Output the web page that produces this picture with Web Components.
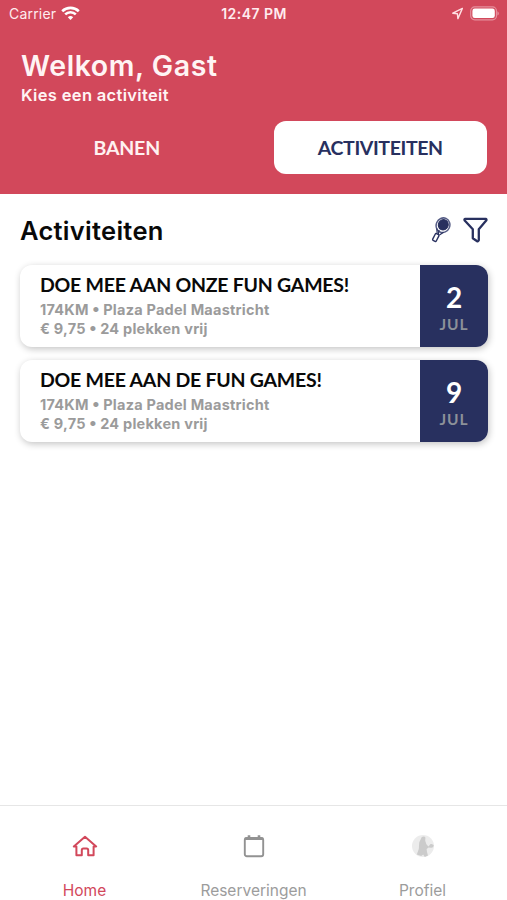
<!DOCTYPE html>
<html lang="nl">
<head>
<meta charset="utf-8">
<title>Activiteiten</title>
<style>
html,body{margin:0;height:100%;background:#fff}
body{font-family:Inter,"Liberation Sans",sans-serif}
</style>
</head>
<body>
<padel-app></padel-app>
<script>
function define(name, html) {
  const t = document.createElement('template');
  t.innerHTML = html;
  customElements.define(name, class extends HTMLElement {
    constructor() {
      super();
      this.attachShadow({mode: 'open'}).appendChild(t.content.cloneNode(true));
    }
  });
}

define('status-bar', `
<style>
:host{display:grid;grid-template-columns:1fr auto 1fr;align-items:center;height:27px;padding:0 8px 0 9px;color:#ffecef;font-size:14px;box-sizing:border-box}
.l{display:flex;align-items:center;gap:5px;letter-spacing:.2px}
.c{font-weight:600;font-size:14px;letter-spacing:.45px}
.r{display:flex;align-items:center;justify-content:flex-end;gap:6px}
svg{display:block}
</style>
<div class="l"><span>Carrier</span>
<svg width="19" height="15" viewBox="0 0 19 15" fill="none" stroke="#fff" stroke-width="2.6"><path d="M1.2 5.2a12 12 0 0 1 16.6 0M4.2 8.4a7.6 7.6 0 0 1 10.6 0"/><path d="M9.5 14l-2.7-2.8a3.9 3.9 0 0 1 5.4 0z" fill="#fff" stroke="none"/></svg></div>
<span class="c">12:47 PM</span>
<div class="r">
<svg width="13" height="13" viewBox="0 0 13 13" fill="none" stroke="#ffdfe3" stroke-width="1.4" stroke-linejoin="round"><path d="M12.4 1.4L2.8 6.2l4.6.5.5 4.9z"/></svg>
<svg width="30" height="15" viewBox="0 0 30 15"><rect x="1.7" y=".9" width="25.8" height="12.9" rx="4" fill="none" stroke="#e58f9d" stroke-width="1.2"/><rect x="3.4" y="2.6" width="22.4" height="9.5" rx="2.3" fill="#fff"/><path d="M28.4 5.2v4.4q1.5-.7 1.5-2.2t-1.5-2.2z" fill="#e58f9d"/></svg>
</div>`);

define('segment-tab', `
<style>
:host{display:flex;flex:1;align-items:center;justify-content:center;height:53px;border-radius:12px;color:#fff1f1;font:700 19.5px Lato,sans-serif;letter-spacing:-.2px}
:host([active]){background:#fff;color:#28305f;letter-spacing:-.38px}
</style><slot></slot>`);

define('page-header', `
<style>
:host{display:block;height:193.5px;background:#d2485b;color:#fff4f4}
.t{padding:22px 20px 0 21px}
h1{margin:0;font-size:28.5px;line-height:34px;font-weight:600;letter-spacing:.58px}
p{margin:2px 0 0;font-size:16.5px;line-height:20px;font-weight:600;letter-spacing:.33px}
nav{display:flex;gap:40px;padding:16px 20px 0}
</style>
<status-bar></status-bar>
<div class="t"><h1><slot name="title"></slot></h1><p><slot name="sub"></slot></p></div>
<nav><slot></slot></nav>`);

define('section-bar', `
<style>
:host{display:flex;align-items:center;justify-content:space-between;height:71.5px;padding:0 19px 0 20px;box-sizing:border-box}
h2{margin:4px 0 0;font-size:25.5px;line-height:32px;font-weight:600;color:#090909;letter-spacing:.28px}
.i{display:flex;gap:12.5px;align-items:center;padding-top:2px}
svg{display:block}
</style>
<h2><slot></slot></h2>
<div class="i">
<svg width="20" height="26" viewBox="0 0 20 26" fill="none" stroke="#28305f"><ellipse cx="12" cy="8.2" rx="6.8" ry="7.4" transform="rotate(24 12 8.2)" stroke-width="1.5" stroke="#565d86"/><ellipse cx="12.3" cy="7.8" rx="4.9" ry="5.3" transform="rotate(24 12.3 7.8)" fill="#28305f"/><path d="M5.8 11.5l.4 5M12.6 15.2l-4.2 2.7M8 13l-.6 4" stroke-width="1.2"/><rect x="-2" y="-3.8" width="4" height="7.6" rx=".9" transform="translate(4.8 20.5) rotate(27)" stroke-width="1.4"/></svg>
<svg width="25" height="26" viewBox="0 0 25 26" fill="none" stroke="#28305f" stroke-width="2.3" stroke-linejoin="round" stroke-linecap="round"><path d="M2.3 1.8h20.4q1.3.5.5 1.7L15.8 12.2v11q-.6 1.7-2 .8l-4-2.8v-9L1.7 3.5q-.8-1.2.6-1.7z"/></svg>
</div>`);

define('activity-card', `
<style>
:host{display:flex;height:82px;border-radius:12px;background:#fff;box-shadow:1px 2px 7px rgba(0,0,0,.24);overflow:hidden}
.b{flex:1;padding:8px 0 0 20px;box-sizing:border-box}
h3{margin:0 0 3px;font:700 19.5px/24px Lato,sans-serif;color:#090909;white-space:nowrap;letter-spacing:-.24px}
p{margin:0;font-size:14.5px;line-height:19px;font-weight:700;color:#9b9b9b;white-space:nowrap;letter-spacing:.23px}
.d{width:68px;background:#28305f;display:flex;flex-direction:column;align-items:center;padding-top:17px;box-sizing:border-box;font-family:Lato,sans-serif;font-weight:700}
.n{font-size:28px;line-height:31px;color:#fff}
.m{font-size:15.5px;line-height:22px;color:#8c9199;letter-spacing:.9px}
</style>
<div class="b"><h3><slot name="title"></slot></h3><p><slot name="place"></slot></p><p><slot name="price"></slot></p></div>
<div class="d"><span class="n"><slot name="day"></slot></span><span class="m"><slot name="month"></slot></span></div>`);

define('tab-item', `
<style>
:host{display:flex;flex:1;flex-direction:column;align-items:center;color:#9c9c9c;font-size:15.5px}
.i{flex:none;height:26px;display:flex;align-items:center;justify-content:center}
.s{display:block;flex:none;margin-top:22px;line-height:20px}
:host([active]){color:#d2485b}
</style>
<div class="i"><slot name="icon"></slot></div><span class="s"><slot></slot></span>`);

define('padel-app', `
<style>
:host{display:flex;flex-direction:column;height:900px;width:507px;overflow:hidden}
main{flex:1}
.list{display:flex;flex-direction:column;gap:12.5px;padding:0 19px 0 20px}
.dot{font-family:"DejaVu Sans",sans-serif;font-size:14.5px;line-height:1;margin:0 -1.2px}
footer{display:flex;height:95px;border-top:1px solid #e6e6e6;padding-top:27px;box-sizing:border-box}
svg{display:block}
</style>
<page-header><span slot="title">Welkom, Gast</span><span slot="sub">Kies een activiteit</span>
<segment-tab>BANEN</segment-tab><segment-tab active>ACTIVITEITEN</segment-tab></page-header>
<main>
<section-bar>Activiteiten</section-bar>
<div class="list">
<activity-card><span slot="title">DOE MEE AAN ONZE FUN GAMES!</span><span slot="place">174KM <span class="dot">•</span> Plaza Padel Maastricht</span><span slot="price">€ 9,75 <span class="dot">•</span> 24 plekken vrij</span><span slot="day">2</span><span slot="month">JUL</span></activity-card>
<activity-card><span slot="title">DOE MEE AAN DE FUN GAMES!</span><span slot="place">174KM <span class="dot">•</span> Plaza Padel Maastricht</span><span slot="price">€ 9,75 <span class="dot">•</span> 24 plekken vrij</span><span slot="day">9</span><span slot="month">JUL</span></activity-card>
</div>
</main>
<footer>
<tab-item active><svg slot="icon" width="26" height="22" viewBox="0 0 26 22" fill="none" stroke="#d2485b" stroke-width="2" stroke-linejoin="round" stroke-linecap="round"><path d="M1.8 11.4L13 1.8l11.2 9.6H21.6v8.8H16.2v-5q0-1.8-1.6-1.8h-3.2q-1.6 0-1.6 1.8v5H4.4v-8.8z"/></svg>Home</tab-item>
<tab-item><svg slot="icon" width="22" height="24" viewBox="0 0 22 24" fill="none" stroke="#929292"><rect x="1.8" y="4" width="18.4" height="18.2" rx="2" stroke-width="1.9"/><path d="M1.8 4.8h18.4M6 1.2v3M16 1.2v3" stroke-width="2.6"/></svg>Reserveringen</tab-item>
<tab-item><svg slot="icon" width="24" height="24" viewBox="0 0 24 24"><circle cx="12" cy="12" r="11" fill="#ececec"/><path d="M10.8 3q2.6-1.4 3.6.6l-.2 3.2 1.2 3.4 2 2.2 2.2-2.4q2.2-.4 3.2 1.6-.6 2.4-2.6 2.2l-2.6-.4-2 1.6.4 3 1 3.4-3.2 1.6-1.6-2.4-2 1.4-4.4-1.6L7.8 15l.4-6.4z" fill="#cbcbcb"/></svg>Profiel</tab-item>
</footer>`);
</script>
</body>
</html>
